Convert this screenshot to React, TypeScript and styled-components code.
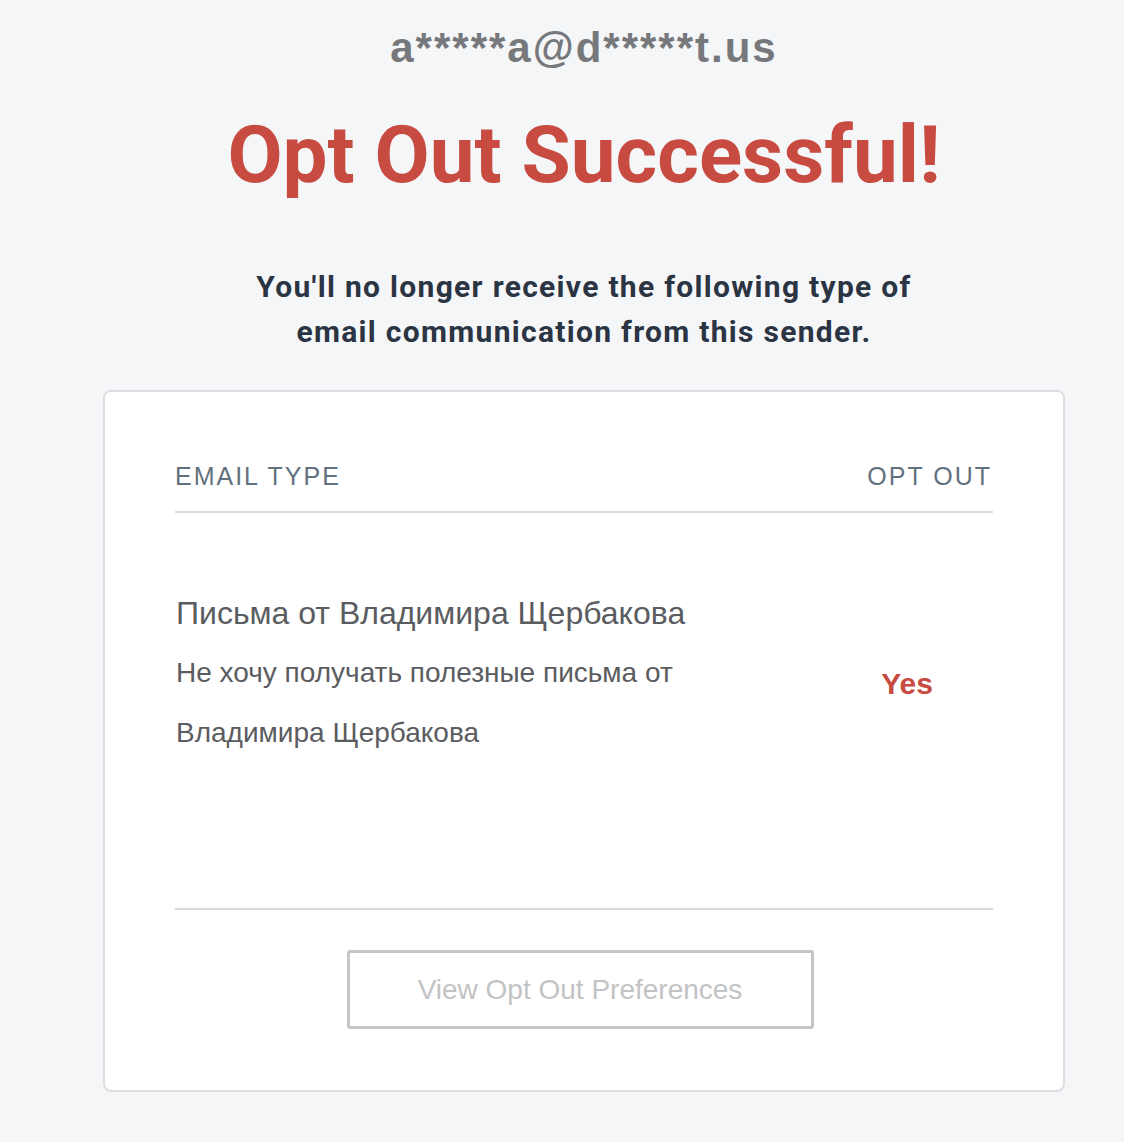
import React from "react";
import styled, { createGlobalStyle } from "styled-components";

const Global = createGlobalStyle`
  html, body { margin: 0; padding: 0; background: #f5f6f8; }
  body { font-family: "Liberation Sans", Arial, sans-serif; }
`;

const Page = styled.main`
  display: flex;
  flex-direction: column;
  align-items: center;
  padding: 24px 0 40px 44px;
`;

const MaskedEmail = styled.div`
  font-family: "Liberation Sans", Arial, sans-serif;
  font-weight: 700;
  font-size: 42px;
  letter-spacing: 2px;
  line-height: 48px;
  color: #76787b;
`;

const Title = styled.h1`
  margin: 35px 0 0;
  font-family: Roboto, "Liberation Sans", sans-serif;
  font-weight: 700;
  font-size: 80px;
  line-height: 96px;
  color: #c84b41;
`;

const Lead = styled.p`
  margin: 61px 0 0;
  width: 720px;
  text-align: center;
  font-family: Roboto, "Liberation Sans", sans-serif;
  font-weight: 700;
  font-size: 30px;
  letter-spacing: 1.3px;
  line-height: 45px;
  color: #2b3443;
`;

const Card = styled.section`
  box-sizing: border-box;
  margin-top: 36px;
  width: 962px;
  background: #ffffff;
  border: 2px solid #dcdee1;
  border-radius: 8px;
  padding: 70px 70px 61px;
  display: flex;
  flex-direction: column;
`;

const HeaderRow = styled.div`
  display: flex;
  justify-content: space-between;
  align-items: center;
  padding: 0 1px 20px 0;
  border-bottom: 2px solid #dadada;
`;

const HeaderCell = styled.div`
  font-family: "Liberation Sans", Arial, sans-serif;
  font-size: 25px;
  letter-spacing: 2px;
  color: #62717e;
`;

const ItemRow = styled.div`
  display: flex;
  align-items: center;
  justify-content: space-between;
  padding: 80px 60px 145px 1px;
  border-bottom: 2px solid #dadada;
`;

const ItemText = styled.div`
  display: flex;
  flex-direction: column;
  width: 540px;
`;

const ItemName = styled.div`
  font-size: 32px;
  line-height: 40px;
  color: #5b5c5f;
`;

const ItemDesc = styled.div`
  margin-top: 10px;
  font-size: 28px;
  line-height: 60px;
  color: #5b5c5f;
`;

const YesLabel = styled.div`
  padding-top: 12px;
  font-weight: 700;
  font-size: 30px;
  color: #c84b41;
`;

const ButtonRow = styled.div`
  display: flex;
  justify-content: center;
  padding: 40px 8px 0 0;
`;

const OutlineButton = styled.button`
  box-sizing: border-box;
  width: 467px;
  height: 79px;
  background: #ffffff;
  border: 3px solid #c4c5c7;
  border-radius: 3px;
  font-family: "Liberation Sans", Arial, sans-serif;
  font-size: 28px;
  color: #c2c3c5;
  cursor: pointer;
`;

export default function App() {
  return (
    <>
      <Global />
      <Page>
        <MaskedEmail>a*****a@d*****t.us</MaskedEmail>
        <Title>Opt Out Successful!</Title>
        <Lead>You'll no longer receive the following type of email communication from this sender.</Lead>
        <Card>
          <HeaderRow>
            <HeaderCell>EMAIL TYPE</HeaderCell>
            <HeaderCell>OPT OUT</HeaderCell>
          </HeaderRow>
          <ItemRow>
            <ItemText>
              <ItemName>Письма от Владимира Щербакова</ItemName>
              <ItemDesc>Не хочу получать полезные письма от Владимира Щербакова</ItemDesc>
            </ItemText>
            <YesLabel>Yes</YesLabel>
          </ItemRow>
          <ButtonRow>
            <OutlineButton>View Opt Out Preferences</OutlineButton>
          </ButtonRow>
        </Card>
      </Page>
    </>
  );
}
